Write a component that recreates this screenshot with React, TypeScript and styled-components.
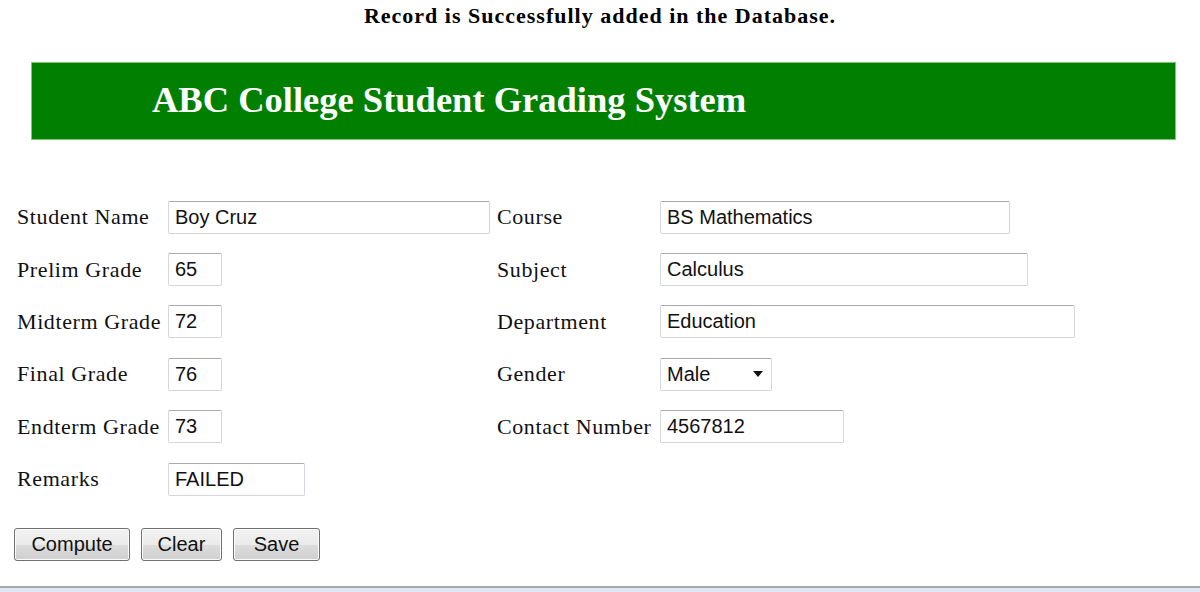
import React from "react";
import styled, { createGlobalStyle } from "styled-components";

const Global = createGlobalStyle`
  html, body { margin: 0; padding: 0; background: #ffffff; }
  body { font-family: "Liberation Serif", "Times New Roman", serif; color: #000; }
`;

const Page = styled.div`
  width: 1200px;
  height: 592px;
  display: flex;
  flex-direction: column;
  overflow: hidden;
`;

const Message = styled.div`
  font-family: "Liberation Serif", serif;
  font-weight: bold;
  font-size: 22px;
  letter-spacing: 1px;
  line-height: 24px;
  text-align: center;
  padding-top: 4px;
  height: 62px;
  box-sizing: border-box;
`;

const Banner = styled.div`
  margin: 0 24px 0 31px;
  height: 78px;
  background: #007f00;
  border: 1px solid #7cc67c;
  box-sizing: border-box;
  display: flex;
  align-items: center;
  padding-left: 120px;
`;

const BannerTitle = styled.h1`
  margin: 0;
  color: #ffffff;
  font-family: "Liberation Serif", serif;
  font-weight: bold;
  font-size: 36.5px;
  line-height: 40px;
  padding-bottom: 2px;
`;

const Form = styled.div`
  margin-top: 51px;
  padding-left: 17px;
  display: grid;
  grid-template-columns: 151px 329px 163px 1fr;
  grid-auto-rows: 52.4px;
  align-items: center;
`;

const Label = styled.div`
  font-family: "Liberation Serif", serif;
  font-size: 22px;
  letter-spacing: 0.6px;
  white-space: nowrap;
  color: #111;
`;

const Field = styled.div<{ $w: number }>`
  width: ${(p) => p.$w}px;
  height: 33px;
  box-sizing: border-box;
  border: 1px solid #d3d6db;
  border-top-color: #a9abb0;
  border-radius: 2px;
  background: #fff;
  display: flex;
  align-items: center;
  padding-left: 6px;
  font-family: "Liberation Sans", Arial, sans-serif;
  font-size: 20px;
  color: #111;
  white-space: nowrap;
`;

const Select = styled(Field)`
  justify-content: space-between;
  padding-right: 8px;
`;

const Empty = styled.div``;

const Buttons = styled.div`
  margin-top: 23px;
  padding-left: 14px;
  display: flex;
  gap: 11px;
`;

const Button = styled.button<{ $w: number }>`
  width: ${(p) => p.$w}px;
  height: 33px;
  box-sizing: border-box;
  border: 1px solid #707070;
  border-radius: 3px;
  background: linear-gradient(#f2f2f2 0%, #ebebeb 50%, #dddddd 51%, #cfcfcf 100%);
  font-family: "Liberation Sans", Arial, sans-serif;
  font-size: 20px;
  color: #111;
  padding: 0;
  box-shadow: inset 0 0 0 1px #fcfcfc;
`;

const Footer = styled.div`
  margin-top: auto;
  height: 6px;
  border-top: 2px solid #a8a8a8;
  background: #dfe8f5;
  box-sizing: border-box;
`;

const Arrow = () => (
  <svg width="10" height="6" viewBox="0 0 10 6">
    <path d="M0 0 H10 L5 6 Z" fill="#111" />
  </svg>
);

export default function App() {
  return (
    <Page>
      <Global />
      <Message>Record is Successfully added in the Database.</Message>
      <Banner>
        <BannerTitle>ABC College Student Grading System</BannerTitle>
      </Banner>
      <Form>
        <Label>Student Name</Label>
        <Field $w={322}>Boy Cruz</Field>
        <Label>Course</Label>
        <Field $w={350}>BS Mathematics</Field>

        <Label>Prelim Grade</Label>
        <Field $w={54}>65</Field>
        <Label>Subject</Label>
        <Field $w={368}>Calculus</Field>

        <Label>Midterm Grade</Label>
        <Field $w={54}>72</Field>
        <Label>Department</Label>
        <Field $w={415}>Education</Field>

        <Label>Final Grade</Label>
        <Field $w={54}>76</Field>
        <Label>Gender</Label>
        <Select $w={112}>
          <span>Male</span>
          <Arrow />
        </Select>

        <Label>Endterm Grade</Label>
        <Field $w={54}>73</Field>
        <Label>Contact Number</Label>
        <Field $w={184}>4567812</Field>

        <Label>Remarks</Label>
        <Field $w={137}>FAILED</Field>
        <Empty />
        <Empty />
      </Form>
      <Buttons>
        <Button $w={116}>Compute</Button>
        <Button $w={81}>Clear</Button>
        <Button $w={87}>Save</Button>
      </Buttons>
      <Footer />
    </Page>
  );
}
